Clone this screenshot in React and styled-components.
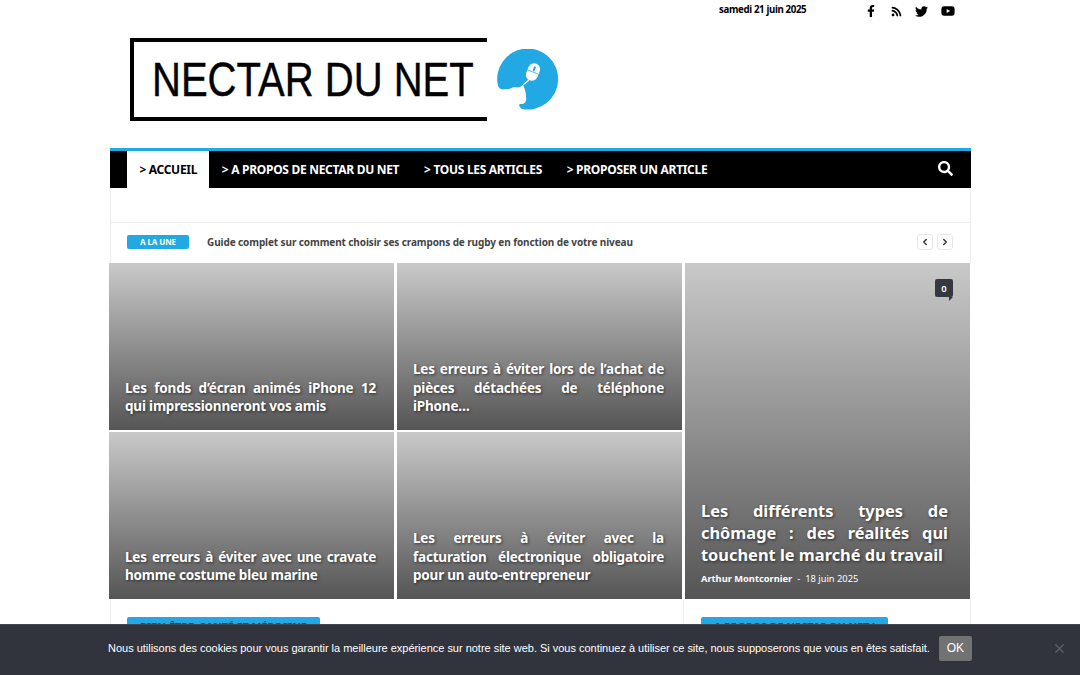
import React from "react";
import styled, { createGlobalStyle } from "styled-components";
import { FaFacebookF, FaRss, FaTwitter, FaYoutube, FaSearch } from "react-icons/fa";
import { FiChevronLeft, FiChevronRight, FiX } from "react-icons/fi";

const Global = createGlobalStyle`
  html, body { margin: 0; padding: 0; height: 675px; overflow: hidden; background: #fff; }
  * { box-sizing: border-box; }
  body { font-family: "Noto Sans", "Open Sans", sans-serif; color: #000; }
`;

const Page = styled.div`
  width: 862px;
  margin-left: 109px;
`;

const TopBar = styled.div`
  height: 21px;
  display: flex;
  align-items: flex-start;
  padding-left: 610px;
`;

const DateText = styled.span`
  font-size: 9.7px;
  font-weight: 700;
  line-height: 20px;
  width: 139px;
  letter-spacing: -0.36px;
  white-space: nowrap;
`;

const Socials = styled.div`
  display: flex;
  padding-top: 4px;
`;

const Social = styled.a`
  width: 25.6px;
  height: 14px;
  display: flex;
  justify-content: center;
  align-items: center;
  color: #000;
  font-size: ${(p) => p.$size}px;
`;

const LogoRow = styled.div`
  height: 127px;
  padding: 17px 0 0 21px;
  display: flex;
  align-items: flex-start;
`;

const LogoFrame = styled.div`
  width: 357px;
  height: 83px;
  border: 4px solid #000;
  border-right: 0;
  display: flex;
  align-items: center;
  padding-left: 18px;
`;

const LogoText = styled.span`
  display: inline-block;
  font-family: "Liberation Sans", Arial, sans-serif;
  font-size: 49px;
  line-height: 1;
  color: #000;
  -webkit-text-stroke: 0.4px #000;
  transform: scaleX(0.817);
  transform-origin: left center;
  white-space: nowrap;
`;

const LogoMark = styled.svg`
  width: 62px;
  height: 62px;
  margin: 11px 0 0 10px;
  flex: none;
`;

const Nav = styled.nav`
  height: 40px;
  margin-left: 1px;
  border-top: 3px solid #22a9e3;
  background: #000;
  display: flex;
  align-items: stretch;
  padding-left: 17px;
`;

const NavItem = styled.a`
  display: flex;
  align-items: center;
  padding: 0 12.4px;
  font-size: 12px;
  font-weight: 700;
  letter-spacing: -0.3px;
  white-space: nowrap;
  color: ${(p) => (p.$active ? "#000" : "#fff")};
  background: ${(p) => (p.$active ? "#fff" : "transparent")};
`;

const NavSearch = styled.div`
  margin-left: auto;
  width: 52px;
  display: flex;
  align-items: center;
  justify-content: center;
  padding-bottom: 2px;
  color: #fff;
  font-size: 15px;
`;

const Spacer = styled.div`
  height: 35px;
  margin-left: 1px;
  border-left: 1px solid #ededed;
  border-right: 1px solid #ededed;
  border-bottom: 1px solid #ededed;
`;

const Ticker = styled.div`
  height: 40px;
  margin-left: 1px;
  border-left: 1px solid #ededed;
  border-right: 1px solid #ededed;
  display: flex;
  align-items: center;
  padding: 0 17px 3px 16px;
`;

const Badge = styled.span`
  width: 62px;
  height: 14px;
  background: #22a9e3;
  border-radius: 2px;
  color: #fff;
  font-size: 8px;
  font-weight: 700;
  display: flex;
  align-items: center;
  justify-content: center;
  letter-spacing: -0.1px;
`;

const TickerText = styled.span`
  margin-left: 18px;
  font-size: 10px;
  font-weight: 700;
  color: #444;
  flex: 1;
  white-space: nowrap;
  letter-spacing: -0.1px;
`;

const Arrow = styled.span`
  width: 16px;
  height: 16px;
  margin-left: 4px;
  border: 1px solid #e6e6e6;
  border-radius: 3px;
  display: flex;
  align-items: center;
  justify-content: center;
  color: #333;
  font-size: 10px;
  background: #fff;
  svg { stroke-width: 3.5; }
`;

const Mosaic = styled.section`
  display: grid;
  grid-template-columns: 285px 285px 285px;
  grid-template-rows: 167px 167px;
  column-gap: 3px;
  row-gap: 2px;
  margin-bottom: 1px;
`;

const Tile = styled.article`
  position: relative;
  grid-row: ${(p) => (p.$big ? "1 / span 2" : "auto")};
  grid-column: ${(p) => (p.$big ? "3" : "auto")};
  background: linear-gradient(180deg, #c9c9c9 0%, #555 100%);
  display: flex;
  flex-direction: column;
  justify-content: flex-end;
  padding: 0 17px ${(p) => (p.$big ? "15px" : "14px")} 16px;
`;

const TileTitle = styled.h3`
  margin: 0;
  color: #fff;
  font-weight: 700;
  font-size: ${(p) => (p.$big ? "16.4px" : "13.5px")};
  line-height: ${(p) => (p.$big ? "22px" : "18.6px")};
  letter-spacing: ${(p) => (p.$big ? "0" : "-0.2px")};
  text-align: justify;
  text-shadow: 1px 1px 3px rgba(0, 0, 0, 0.6);
  width: ${(p) => (p.$big ? "247px" : "251px")};
`;

const Meta = styled.div`
  margin-top: 6px;
  margin-bottom: -2px;
  display: flex;
  gap: 5px;
  color: #fff;
  font-size: 9.3px;
  line-height: 14px;
`;

const Author = styled.span`
  font-weight: 700;
`;

const Comment = styled.span`
  position: absolute;
  top: 16px;
  right: 17px;
  width: 18px;
  height: 18px;
  border-radius: 2px;
  background: #36383f;
  color: #fff;
  font-size: 9.5px;
  font-weight: 600;
  display: flex;
  align-items: center;
  justify-content: center;
  &::after {
    content: "";
    position: absolute;
    left: 14px;
    top: 18px;
    border-style: solid;
    border-width: 4px 4px 0 0;
    border-color: #36383f transparent transparent transparent;
  }
`;

const Lower = styled.div`
  height: 60px;
  margin-left: 1px;
  display: grid;
  grid-template-columns: 572px 1fr;
  border-left: 1px solid #ededed;
  border-right: 1px solid #ededed;
`;

const LowerCol = styled.div`
  display: flex;
  align-items: flex-start;
  padding: 17px 0 0 ${(p) => p.$left}px;
  border-left: ${(p) => (p.$line ? "1px solid #ededed" : "0")};
`;

const BlockTitle = styled.span`
  height: 18px;
  padding: 0 13px;
  border-radius: 2px;
  background: #22a9e3;
  color: #1f3d55;
  font-size: 10.5px;
  font-weight: 700;
  line-height: 21px;
  letter-spacing: 0.07px;
  white-space: nowrap;
`;

const Cookie = styled.div`
  position: fixed;
  left: 0;
  right: 0;
  bottom: 0;
  height: 51px;
  background: #32343d;
  border-top: 1px solid #44464f;
  display: flex;
  align-items: center;
  padding: 0 0 4px 108px;
  font-family: "Liberation Sans", Arial, sans-serif;
  color: #fff;
`;

const CookieText = styled.span`
  font-size: 11px;
  letter-spacing: -0.017px;
  white-space: nowrap;
`;

const OkButton = styled.button`
  margin-left: 9px;
  width: 33px;
  height: 25px;
  padding: 0;
  border: 0;
  border-radius: 2px;
  background: #727272;
  color: #fff;
  font-family: "Liberation Sans", Arial, sans-serif;
  font-size: 12px;
`;

const CloseX = styled.span`
  position: absolute;
  right: 13px;
  top: 16px;
  color: #5f6168;
  font-size: 15px;
  line-height: 1;
  display: flex;
`;

const tiles = [
  { t: "Les fonds d’écran animés iPhone 12 qui impressionneront vos amis" },
  { t: "Les erreurs à éviter lors de l’achat de pièces détachées de téléphone iPhone…" },
  { t: "Les différents types de chômage : des réalités qui touchent le marché du travail", big: true },
  { t: "Les erreurs à éviter avec une cravate homme costume bleu marine" },
  { t: "Les erreurs à éviter avec la facturation électronique obligatoire pour un auto-entrepreneur" },
];

export default function App() {
  return (
    <>
      <Global />
      <Page>
        <TopBar>
          <DateText>samedi 21 juin 2025</DateText>
          <Socials>
            <Social $size={12}><FaFacebookF /></Social>
            <Social $size={11}><FaRss /></Social>
            <Social $size={13}><FaTwitter /></Social>
            <Social $size={14}><FaYoutube /></Social>
          </Socials>
        </TopBar>
        <LogoRow>
          <LogoFrame><LogoText>NECTAR DU NET</LogoText></LogoFrame>
          <LogoMark viewBox="0 0 62 62">
            <path fill="#22a9e3" d="M1 37A30.500 30.500 0 1 1 25 60C22 58 21 55 24 55C28 55 30 52 29 48C29 44 28 40 26 36C24 38 21 39 18 38C15 38 13 41 10 40C7 40 4 42 1 37Z" />
            <g transform="rotate(22 36 23)">
              <rect x="30" y="14" width="12" height="18" rx="6" fill="#fff" />
              <rect x="35" y="17" width="2" height="5" rx="1" fill="#22a9e3" />
              <path d="M30 23h12" stroke="#22a9e3" strokeWidth="0.700" />
            </g>
            <path d="M32 31l-6 5" stroke="#fff" strokeWidth="1.200" />
          </LogoMark>
        </LogoRow>
        <Nav>
          <NavItem $active>&gt; ACCUEIL</NavItem>
          <NavItem>&gt; A PROPOS DE NECTAR DU NET</NavItem>
          <NavItem>&gt; TOUS LES ARTICLES</NavItem>
          <NavItem>&gt; PROPOSER UN ARTICLE</NavItem>
          <NavSearch><FaSearch /></NavSearch>
        </Nav>
        <Spacer />
        <Ticker>
          <Badge>A LA UNE</Badge>
          <TickerText>Guide complet sur comment choisir ses crampons de rugby en fonction de votre niveau</TickerText>
          <Arrow><FiChevronLeft /></Arrow>
          <Arrow><FiChevronRight /></Arrow>
        </Ticker>
        <Mosaic>
          {tiles.map((x) => (
            <Tile key={x.t} $big={x.big}>
              {x.big && <Comment>0</Comment>}
              <TileTitle $big={x.big}>{x.t}</TileTitle>
              {x.big && (
                <Meta>
                  <Author>Arthur Montcornier</Author>
                  <span>-</span>
                  <span>18 juin 2025</span>
                </Meta>
              )}
            </Tile>
          ))}
        </Mosaic>
        <Lower>
          <LowerCol $left={16}><BlockTitle>BIEN-ÊTRE, SANTÉ ET MÉDECINE</BlockTitle></LowerCol>
          <LowerCol $left={17} $line><BlockTitle>A PROPOS DE NECTAR DU NET !</BlockTitle></LowerCol>
        </Lower>
      </Page>
      <Cookie>
        <CookieText>Nous utilisons des cookies pour vous garantir la meilleure expérience sur notre site web. Si vous continuez à utiliser ce site, nous supposerons que vous en êtes satisfait.</CookieText>
        <OkButton>OK</OkButton>
        <CloseX><FiX /></CloseX>
      </Cookie>
    </>
  );
}
